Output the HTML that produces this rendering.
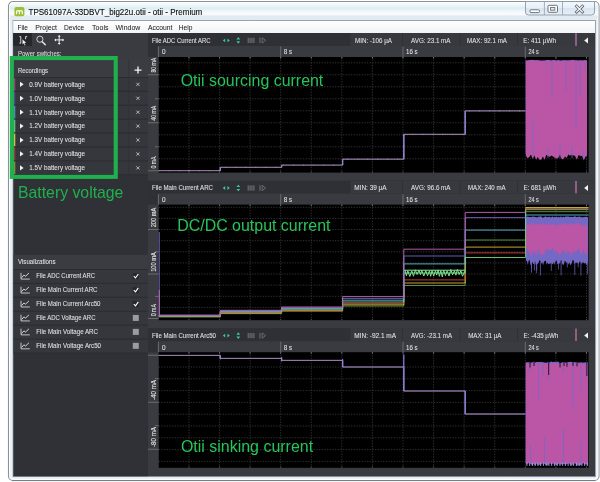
<!DOCTYPE html>
<html><head><meta charset="utf-8"><title>otii</title>
<style>html,body{margin:0;padding:0;background:#fff}body{width:600px;height:482px;overflow:hidden}svg{display:block;will-change:transform}</style></head>
<body>
<svg width="600" height="482" viewBox="0 0 600 482" font-family="Liberation Sans, Arial, sans-serif">
<defs>
<linearGradient id="frame" x1="0" y1="0" x2="0" y2="1"><stop offset="0" stop-color="#fbfdfe"/><stop offset="0.006" stop-color="#f3f9fb"/><stop offset="0.014" stop-color="#dcedf2"/><stop offset="0.022" stop-color="#f5fafc"/><stop offset="0.027" stop-color="#f7fafc"/><stop offset="0.031" stop-color="#e1e9f1"/><stop offset="0.05" stop-color="#e6eef6"/><stop offset="1" stop-color="#eaf1f8"/></linearGradient>
<linearGradient id="btn" x1="0" y1="0" x2="0" y2="1"><stop offset="0" stop-color="#f4f8fc"/><stop offset="0.5" stop-color="#e6eef7"/><stop offset="0.5" stop-color="#d8e4f0"/><stop offset="1" stop-color="#e6eff8"/></linearGradient>
<linearGradient id="menu" x1="0" y1="0" x2="0" y2="1"><stop offset="0" stop-color="#ffffff"/><stop offset="1" stop-color="#f1f3f6"/></linearGradient>
</defs>
<rect x="0.00" y="0.00" width="600.00" height="482.00" fill="#ffffff" />
<rect x="8.5" y="1.5" width="590.5" height="479" rx="4.5" ry="4.5" fill="url(#frame)" stroke="#8b9199" stroke-width="1.1"/>
<rect x="9.6" y="2.6" width="588.3" height="476.8" rx="3.6" ry="3.6" fill="none" stroke="#ffffff" stroke-opacity="0.9" stroke-width="1"/>
<path d="M12 480.6H595.5" stroke="#6f757d" stroke-width="1" stroke-opacity="0.75"/>
<rect x="13.1" y="20.6" width="582.3" height="456" fill="none" stroke="#8d959e" stroke-width="0.9"/>
<rect x="14.4" y="6.9" width="10" height="9.4" rx="1.8" fill="#9cc034"/>
<path d="M16.5 14.3v-2.4q0-1.3 1.45-1.3t1.45 1.3v2.4m0-2.4q0-1.3 1.45-1.3t1.45 1.3v2.4" fill="none" stroke="#fff" stroke-width="1.2"/>
<text x="28.50" y="14.80" font-size="8.5" fill="#0a0a0a" textLength="173.80" lengthAdjust="spacingAndGlyphs" stroke="#0a0a0a" stroke-width="0.12">TPS61097A-33DBVT_big22u.otii - otii - Premium</text>
<path d="M525.5 1.5h69v10.5q0 3-3 3h-63q-3 0-3-3z" fill="url(#btn)" stroke="#8b97a5" stroke-width="0.9"/>
<path d="M544.4 2v13M562.5 2v13" stroke="#9aa6b3" stroke-width="0.9"/>
<rect x="530" y="9.8" width="9.5" height="2.8" rx="1" fill="#fff" stroke="#5d646d" stroke-width="0.9"/>
<rect x="548" y="5.3" width="9.5" height="7" rx="1" fill="#fff" stroke="#5d646d" stroke-width="0.9"/>
<rect x="550.6" y="7.6" width="4.3" height="2.6" fill="#dfe8f2" stroke="#5d646d" stroke-width="0.8"/>
<path d="M576.6 6.2l5.8 5.8m0-5.8l-5.8 5.8" stroke="#5d646d" stroke-width="2.8" stroke-linecap="square"/>
<path d="M576.6 6.2l5.8 5.8m0-5.8l-5.8 5.8" stroke="#fff" stroke-width="1.2" stroke-linecap="square"/>
<rect x="13.30" y="21.00" width="581.70" height="12.00" fill="url(#menu)" />
<text x="17.50" y="30.00" font-size="7.2" fill="#111" textLength="10.50" lengthAdjust="spacingAndGlyphs" >File</text>
<text x="35.30" y="30.00" font-size="7.2" fill="#111" textLength="21.70" lengthAdjust="spacingAndGlyphs" >Project</text>
<text x="64.00" y="30.00" font-size="7.2" fill="#111" textLength="20.30" lengthAdjust="spacingAndGlyphs" >Device</text>
<text x="92.00" y="30.00" font-size="7.2" fill="#111" textLength="16.50" lengthAdjust="spacingAndGlyphs" >Tools</text>
<text x="115.50" y="30.00" font-size="7.2" fill="#111" textLength="24.80" lengthAdjust="spacingAndGlyphs" >Window</text>
<text x="148.00" y="30.00" font-size="7.2" fill="#111" textLength="24.50" lengthAdjust="spacingAndGlyphs" >Account</text>
<text x="178.80" y="30.00" font-size="7.2" fill="#111" textLength="13.70" lengthAdjust="spacingAndGlyphs" >Help</text>
<rect x="13.50" y="33.00" width="581.50" height="443.20" fill="#3a3b40" />
<rect x="13.50" y="33.00" width="134.50" height="443.20" fill="#303136" />
<rect x="13.50" y="33.00" width="134.50" height="27.00" fill="#3a3b40" />
<rect x="13.30" y="33.00" width="18.70" height="13.00" fill="#26272b" />
<path d="M19.4 36.6h1.4v6.6h-1.4M27.2 36.6h-1.6v2.6" fill="none" stroke="#e8e8e8" stroke-width="0.9"/>
<path d="M22.4 39.2l0 5.4 1.3-1.2 1 2 .9-.4-1-2 1.8-.2z" fill="#fff" stroke="#222" stroke-width="0.3"/>
<circle cx="39.9" cy="39.2" r="3.1" fill="none" stroke="#dcdcdc" stroke-width="0.9"/><path d="M42.3 41.7l2.9 2.9" stroke="#dcdcdc" stroke-width="1.5" stroke-linecap="round"/>
<path d="M59.2 35.6v8.6M54.9 39.9h8.6" stroke="#f0f0f0" stroke-width="1"/><path d="M59.2 35l1.5 1.7h-3zM59.2 44.8l1.5-1.7h-3zM54.3 39.9l1.7-1.5v3zM64.1 39.9l-1.7-1.5v3z" fill="#f0f0f0"/>
<text x="18.00" y="55.80" font-size="6.7" fill="#dcdcde" textLength="43.40" lengthAdjust="spacingAndGlyphs"  stroke="#dcdcde" stroke-width="0.06">Power switches:</text>
<rect x="13.50" y="60.00" width="134.50" height="17.00" fill="#3b3c41" />
<text x="18.00" y="72.60" font-size="6.7" fill="#e2e2e4" textLength="30.00" lengthAdjust="spacingAndGlyphs"  stroke="#e2e2e4" stroke-width="0.06">Recordings</text>
<rect x="13.50" y="77.00" width="134.50" height="13.92" fill="#36373c" />
<rect x="13.50" y="77.00" width="134.50" height="0.90" fill="#2b2c31" />
<rect x="13.50" y="77.90" width="1.80" height="13.02" fill="#96407c" />
<path d="M20 81.76l3.6 2.6-3.6 2.6z" fill="#f2f2f2"/>
<text x="29.30" y="86.66" font-size="6.7" fill="#e2e2e4" textLength="55.70" lengthAdjust="spacingAndGlyphs"  stroke="#e2e2e4" stroke-width="0.06">0.9V battery voltage</text>
<path d="M136.3 82.76l3.2 3.2m0-3.2l-3.2 3.2" stroke="#d0d0d2" stroke-width="0.8"/>
<rect x="13.50" y="90.92" width="134.50" height="13.92" fill="#36373c" />
<rect x="13.50" y="90.92" width="134.50" height="0.90" fill="#2b2c31" />
<rect x="13.50" y="91.82" width="1.80" height="13.02" fill="#514892" />
<path d="M20 95.68l3.6 2.6-3.6 2.6z" fill="#f2f2f2"/>
<text x="29.30" y="100.58" font-size="6.7" fill="#e2e2e4" textLength="55.70" lengthAdjust="spacingAndGlyphs"  stroke="#e2e2e4" stroke-width="0.06">1.0V battery voltage</text>
<path d="M136.3 96.68l3.2 3.2m0-3.2l-3.2 3.2" stroke="#d0d0d2" stroke-width="0.8"/>
<rect x="13.50" y="104.84" width="134.50" height="13.92" fill="#36373c" />
<rect x="13.50" y="104.84" width="134.50" height="0.90" fill="#2b2c31" />
<rect x="13.50" y="105.74" width="1.80" height="13.02" fill="#4a8fb6" />
<path d="M20 109.60l3.6 2.6-3.6 2.6z" fill="#f2f2f2"/>
<text x="29.30" y="114.50" font-size="6.7" fill="#e2e2e4" textLength="55.70" lengthAdjust="spacingAndGlyphs"  stroke="#e2e2e4" stroke-width="0.06">1.1V battery voltage</text>
<path d="M136.3 110.60l3.2 3.2m0-3.2l-3.2 3.2" stroke="#d0d0d2" stroke-width="0.8"/>
<rect x="13.50" y="118.76" width="134.50" height="13.92" fill="#36373c" />
<rect x="13.50" y="118.76" width="134.50" height="0.90" fill="#2b2c31" />
<rect x="13.50" y="119.66" width="1.80" height="13.02" fill="#67b981" />
<path d="M20 123.52l3.6 2.6-3.6 2.6z" fill="#f2f2f2"/>
<text x="29.30" y="128.42" font-size="6.7" fill="#e2e2e4" textLength="55.70" lengthAdjust="spacingAndGlyphs"  stroke="#e2e2e4" stroke-width="0.06">1.2V battery voltage</text>
<path d="M136.3 124.52l3.2 3.2m0-3.2l-3.2 3.2" stroke="#d0d0d2" stroke-width="0.8"/>
<rect x="13.50" y="132.68" width="134.50" height="13.92" fill="#36373c" />
<rect x="13.50" y="132.68" width="134.50" height="0.90" fill="#2b2c31" />
<rect x="13.50" y="133.58" width="1.80" height="13.02" fill="#c9c04a" />
<path d="M20 137.44l3.6 2.6-3.6 2.6z" fill="#f2f2f2"/>
<text x="29.30" y="142.34" font-size="6.7" fill="#e2e2e4" textLength="55.70" lengthAdjust="spacingAndGlyphs"  stroke="#e2e2e4" stroke-width="0.06">1.3V battery voltage</text>
<path d="M136.3 138.44l3.2 3.2m0-3.2l-3.2 3.2" stroke="#d0d0d2" stroke-width="0.8"/>
<rect x="13.50" y="146.60" width="134.50" height="13.92" fill="#36373c" />
<rect x="13.50" y="146.60" width="134.50" height="0.90" fill="#2b2c31" />
<rect x="13.50" y="147.50" width="1.80" height="13.02" fill="#9a3a3a" />
<path d="M20 151.36l3.6 2.6-3.6 2.6z" fill="#f2f2f2"/>
<text x="29.30" y="156.26" font-size="6.7" fill="#e2e2e4" textLength="55.70" lengthAdjust="spacingAndGlyphs"  stroke="#e2e2e4" stroke-width="0.06">1.4V battery voltage</text>
<path d="M136.3 152.36l3.2 3.2m0-3.2l-3.2 3.2" stroke="#d0d0d2" stroke-width="0.8"/>
<rect x="13.50" y="160.52" width="134.50" height="13.92" fill="#36373c" />
<rect x="13.50" y="160.52" width="134.50" height="0.90" fill="#2b2c31" />
<rect x="13.50" y="161.42" width="1.80" height="13.02" fill="#848f3a" />
<path d="M20 165.28l3.6 2.6-3.6 2.6z" fill="#f2f2f2"/>
<text x="29.30" y="170.18" font-size="6.7" fill="#e2e2e4" textLength="55.70" lengthAdjust="spacingAndGlyphs"  stroke="#e2e2e4" stroke-width="0.06">1.5V battery voltage</text>
<path d="M136.3 166.28l3.2 3.2m0-3.2l-3.2 3.2" stroke="#d0d0d2" stroke-width="0.8"/>
<rect x="13.50" y="174.40" width="134.50" height="0.90" fill="#2b2c31" />
<rect x="128.40" y="60.00" width="0.80" height="114.60" fill="#303136" />
<path d="M138 66.6v7M134.5 70.1h7" stroke="#f4f4f4" stroke-width="1.3"/>
<rect x="13.50" y="255.00" width="134.50" height="14.00" fill="#3b3c41" />
<text x="18.00" y="264.20" font-size="6.7" fill="#e2e2e4" textLength="37.50" lengthAdjust="spacingAndGlyphs"  stroke="#e2e2e4" stroke-width="0.06">Visualizations</text>
<rect x="13.50" y="269.00" width="134.50" height="13.95" fill="#36373c" />
<rect x="13.50" y="269.00" width="134.50" height="0.90" fill="#2b2c31" />
<path d="M21 272.88v6.2h8.8" fill="none" stroke="#e6e6e6" stroke-width="0.8"/>
<path d="M21.6 277.68l2.3-2.6 1.6 1.2 3.4-3.2" fill="none" stroke="#e6e6e6" stroke-width="0.9"/>
<text x="36.30" y="278.38" font-size="6.7" fill="#e2e2e4" textLength="58.70" lengthAdjust="spacingAndGlyphs"  stroke="#e2e2e4" stroke-width="0.06">File ADC Current ARC</text>
<rect x="132.80" y="273.08" width="6.00" height="6.00" fill="#26272b" />
<path d="M133.8 276.18l1.7 1.8 2.8-4" fill="none" stroke="#fff" stroke-width="1.1"/>
<rect x="13.50" y="282.95" width="134.50" height="13.95" fill="#36373c" />
<rect x="13.50" y="282.95" width="134.50" height="0.90" fill="#2b2c31" />
<path d="M21 286.82v6.2h8.8" fill="none" stroke="#e6e6e6" stroke-width="0.8"/>
<path d="M21.6 291.62l2.3-2.6 1.6 1.2 3.4-3.2" fill="none" stroke="#e6e6e6" stroke-width="0.9"/>
<text x="36.30" y="292.32" font-size="6.7" fill="#e2e2e4" textLength="61.20" lengthAdjust="spacingAndGlyphs"  stroke="#e2e2e4" stroke-width="0.06">File Main Current ARC</text>
<rect x="132.80" y="287.02" width="6.00" height="6.00" fill="#26272b" />
<path d="M133.8 290.12l1.7 1.8 2.8-4" fill="none" stroke="#fff" stroke-width="1.1"/>
<rect x="13.50" y="296.90" width="134.50" height="13.95" fill="#36373c" />
<rect x="13.50" y="296.90" width="134.50" height="0.90" fill="#2b2c31" />
<path d="M21 300.78v6.2h8.8" fill="none" stroke="#e6e6e6" stroke-width="0.8"/>
<path d="M21.6 305.58l2.3-2.6 1.6 1.2 3.4-3.2" fill="none" stroke="#e6e6e6" stroke-width="0.9"/>
<text x="36.30" y="306.28" font-size="6.7" fill="#e2e2e4" textLength="64.20" lengthAdjust="spacingAndGlyphs"  stroke="#e2e2e4" stroke-width="0.06">File Main Current Arc50</text>
<rect x="132.80" y="300.98" width="6.00" height="6.00" fill="#26272b" />
<path d="M133.8 304.08l1.7 1.8 2.8-4" fill="none" stroke="#fff" stroke-width="1.1"/>
<rect x="13.50" y="310.85" width="134.50" height="13.95" fill="#36373c" />
<rect x="13.50" y="310.85" width="134.50" height="0.90" fill="#2b2c31" />
<path d="M21 314.73v6.2h8.8" fill="none" stroke="#e6e6e6" stroke-width="0.8"/>
<path d="M21.6 319.53l2.3-2.6 1.6 1.2 3.4-3.2" fill="none" stroke="#e6e6e6" stroke-width="0.9"/>
<text x="36.30" y="320.23" font-size="6.7" fill="#e2e2e4" textLength="59.20" lengthAdjust="spacingAndGlyphs"  stroke="#e2e2e4" stroke-width="0.06">File ADC Voltage ARC</text>
<rect x="132.80" y="314.93" width="6.00" height="6.00" fill="#9c9c9e" />
<rect x="13.50" y="324.80" width="134.50" height="13.95" fill="#36373c" />
<rect x="13.50" y="324.80" width="134.50" height="0.90" fill="#2b2c31" />
<path d="M21 328.68v6.2h8.8" fill="none" stroke="#e6e6e6" stroke-width="0.8"/>
<path d="M21.6 333.48l2.3-2.6 1.6 1.2 3.4-3.2" fill="none" stroke="#e6e6e6" stroke-width="0.9"/>
<text x="36.30" y="334.18" font-size="6.7" fill="#e2e2e4" textLength="61.70" lengthAdjust="spacingAndGlyphs"  stroke="#e2e2e4" stroke-width="0.06">File Main Voltage ARC</text>
<rect x="132.80" y="328.88" width="6.00" height="6.00" fill="#9c9c9e" />
<rect x="13.50" y="338.75" width="134.50" height="13.95" fill="#36373c" />
<rect x="13.50" y="338.75" width="134.50" height="0.90" fill="#2b2c31" />
<path d="M21 342.63v6.2h8.8" fill="none" stroke="#e6e6e6" stroke-width="0.8"/>
<path d="M21.6 347.43l2.3-2.6 1.6 1.2 3.4-3.2" fill="none" stroke="#e6e6e6" stroke-width="0.9"/>
<text x="36.30" y="348.13" font-size="6.7" fill="#e2e2e4" textLength="64.70" lengthAdjust="spacingAndGlyphs"  stroke="#e2e2e4" stroke-width="0.06">File Main Voltage Arc50</text>
<rect x="132.80" y="342.83" width="6.00" height="6.00" fill="#9c9c9e" />
<rect x="13.50" y="352.70" width="134.50" height="0.90" fill="#2b2c31" />
<rect x="148.00" y="33.00" width="447.00" height="13.00" fill="#2f3035" />
<rect x="350.50" y="33.00" width="244.50" height="13.00" fill="#38393e" />
<rect x="402.10" y="33.00" width="0.80" height="13.00" fill="#2f3035" />
<rect x="459.60" y="33.00" width="0.80" height="13.00" fill="#2f3035" />
<rect x="517.10" y="33.00" width="0.80" height="13.00" fill="#2f3035" />
<rect x="148.00" y="46.00" width="9.90" height="11.00" fill="#2f3035" />
<text x="152.00" y="42.80" font-size="6.7" fill="#e2e2e4" textLength="58.50" lengthAdjust="spacingAndGlyphs"  stroke="#e2e2e4" stroke-width="0.06">File ADC Current ARC</text>
<path d="M222.8 40.4l2.4-1.9v3.8zM229.8 40.4l-2.4-1.9v3.8z" fill="#3cc796"/>
<path d="M238.3 37.1l1.9 2.4h-3.8zM238.3 43.699999999999996l1.9-2.4h-3.8z" fill="#3cc796"/>
<path d="M248.2 37.8v5.2M250.1 37.8v5.2M252 37.8v5.2M253.9 37.8v5.2" stroke="#77787c" stroke-width="1"/>
<path d="M260 37.6v5.6" stroke="#77787c" stroke-width="0.9"/><path d="M262.2 37.8l3.4 2.6-3.4 2.6z" fill="none" stroke="#77787c" stroke-width="0.8"/>
<text x="355.00" y="42.70" font-size="6.3" fill="#e2e2e4" textLength="37.00" lengthAdjust="spacingAndGlyphs"  stroke="#e2e2e4" stroke-width="0.06">MIN: -106 µA</text>
<text x="411.00" y="42.70" font-size="6.3" fill="#e2e2e4" textLength="39.50" lengthAdjust="spacingAndGlyphs"  stroke="#e2e2e4" stroke-width="0.06">AVG: 23.1 mA</text>
<text x="467.00" y="42.70" font-size="6.3" fill="#e2e2e4" textLength="40.00" lengthAdjust="spacingAndGlyphs"  stroke="#e2e2e4" stroke-width="0.06">MAX: 92.1 mA</text>
<text x="523.30" y="42.70" font-size="6.3" fill="#e2e2e4" textLength="32.70" lengthAdjust="spacingAndGlyphs"  stroke="#e2e2e4" stroke-width="0.06">E: 411 µWh</text>
<rect x="575.20" y="33.30" width="1.60" height="12.50" fill="#a8689a" />
<path d="M588 37.4v6l-3.8-3z" fill="#f4f4f4"/>
<rect x="157.90" y="46.50" width="1.00" height="10.50" fill="#6a6b70" />
<text x="162.00" y="54.30" font-size="6.7" fill="#e2e2e4" textLength="3.60" lengthAdjust="spacingAndGlyphs"  stroke="#e2e2e4" stroke-width="0.06">0</text>
<rect x="280.20" y="46.50" width="1.00" height="10.50" fill="#6a6b70" />
<text x="283.80" y="54.30" font-size="6.7" fill="#e2e2e4" textLength="8.40" lengthAdjust="spacingAndGlyphs"  stroke="#e2e2e4" stroke-width="0.06">8 s</text>
<rect x="402.50" y="46.50" width="1.00" height="10.50" fill="#6a6b70" />
<text x="406.00" y="54.30" font-size="6.7" fill="#e2e2e4" textLength="11.60" lengthAdjust="spacingAndGlyphs"  stroke="#e2e2e4" stroke-width="0.06">16 s</text>
<rect x="524.80" y="46.50" width="1.00" height="10.50" fill="#6a6b70" />
<text x="528.40" y="54.30" font-size="6.7" fill="#e2e2e4" textLength="10.40" lengthAdjust="spacingAndGlyphs"  stroke="#e2e2e4" stroke-width="0.06">24 s</text>
<rect x="158.75" y="57.00" width="429.85" height="115.60" fill="#000" />
<path d="M188.97 57.00V172.60 M219.55 57.00V172.60 M250.12 57.00V172.60 M280.70 57.00V172.60 M311.27 57.00V172.60 M341.85 57.00V172.60 M372.43 57.00V172.60 M403.00 57.00V172.60 M433.58 57.00V172.60 M464.15 57.00V172.60 M494.73 57.00V172.60 M525.30 57.00V172.60 M555.88 57.00V172.60 M586.45 57.00V172.60 M158.75 158.80H588.60 M158.75 146.80H588.60 M158.75 134.80H588.60 M158.75 122.80H588.60 M158.75 110.80H588.60 M158.75 98.80H588.60 M158.75 86.80H588.60 M158.75 74.80H588.60 M158.75 62.80H588.60" stroke="#424242" stroke-width="0.75" stroke-dasharray="1.3 1.37" fill="none"/>
<path d="M188.97 57.00v1.6 M219.55 57.00v1.6 M250.12 57.00v1.6 M280.70 57.00v1.6 M311.27 57.00v1.6 M341.85 57.00v1.6 M372.43 57.00v1.6 M403.00 57.00v1.6 M433.58 57.00v1.6 M464.15 57.00v1.6 M494.73 57.00v1.6 M525.30 57.00v1.6 M555.88 57.00v1.6 M586.45 57.00v1.6" stroke="#8a8a8a" stroke-width="0.8" fill="none"/>
<path d="M188.97 172.60v-1.4 M219.55 172.60v-1.4 M250.12 172.60v-1.4 M280.70 172.60v-1.4 M311.27 172.60v-1.4 M341.85 172.60v-1.4 M372.43 172.60v-1.4 M403.00 172.60v-1.4 M433.58 172.60v-1.4 M464.15 172.60v-1.4 M494.73 172.60v-1.4 M525.30 172.60v-1.4 M555.88 172.60v-1.4 M586.45 172.60v-1.4" stroke="#5c5c5c" stroke-width="0.8" fill="none"/>
<rect x="148.00" y="74.40" width="10.60" height="0.80" fill="#77787c" />
<rect x="148.00" y="122.40" width="10.60" height="0.80" fill="#77787c" />
<rect x="148.00" y="170.40" width="10.60" height="0.80" fill="#77787c" />
<rect x="155.00" y="98.40" width="3.60" height="0.80" fill="#77787c" />
<rect x="155.00" y="146.40" width="3.60" height="0.80" fill="#77787c" />
<clipPath id="c1"><rect x="148" y="57" width="11" height="115.6"/></clipPath>
<g clip-path="url(#c1)">
<text transform="translate(155.5 72.60) rotate(-90)" font-size="7" fill="#e2e2e4" stroke="#e2e2e4" stroke-width="0.1" textLength="14.6" lengthAdjust="spacingAndGlyphs">80 mA</text>
</g>
<text transform="translate(155.5 120.60) rotate(-90)" font-size="7" fill="#e2e2e4" stroke="#e2e2e4" stroke-width="0.1" textLength="14.6" lengthAdjust="spacingAndGlyphs">40 mA</text>
<text transform="translate(155.5 168.60) rotate(-90)" font-size="7" fill="#e2e2e4" stroke="#e2e2e4" stroke-width="0.1" textLength="12.2" lengthAdjust="spacingAndGlyphs">0 mA</text>
<path d="M158.75 170.70H220.30V167.30H281.60V165.10H342.60V159.20H403.80V134.30H465.20V110.90H525.60" fill="none" stroke="#7468c6" stroke-width="1.3" stroke-opacity="0.45"/>
<path d="M158.75 170.70H220.30V167.30H281.60V165.10H342.60V159.20H403.80V134.30H465.20V110.90H525.60" fill="none" stroke="#cfa6ca" stroke-width="0.7"/>
<path d="M220.30 170.70V167.30M281.60 167.30V165.10M342.60 165.10V159.20M403.80 159.20V134.30M465.20 134.30V110.90" stroke="#8682dc" stroke-width="1.3" fill="none"/>
<path d="M158.75 170.70H220.30V167.30H281.60V165.10H342.60V159.20H403.80V134.30H465.20V110.90H525.60" fill="none" stroke="#e8c860" stroke-width="0.7" stroke-dasharray="1 9" stroke-opacity="0.6"/>
<path d="M525.6 60.1 L527.3 60.5 L529.0 60.3 L530.7 59.9 L532.4 59.8 L534.1 59.9 L535.8 60.2 L537.5 59.9 L539.2 60.4 L540.9 60.4 L542.6 60.8 L544.3 60.7 L546.0 59.9 L547.7 60.1 L549.4 60.0 L551.1 60.4 L552.8 60.3 L554.5 59.9 L556.2 60.5 L557.9 60.1 L559.6 60.3 L561.3 60.6 L563.0 60.0 L564.7 60.3 L566.4 60.5 L568.1 60.8 L569.8 60.2 L571.5 60.0 L573.2 59.8 L574.9 60.6 L576.6 60.7 L578.3 60.5 L580.0 60.4 L581.7 60.6 L583.4 60.3 L585.1 59.9 L586.8 60.4 L586.8 156.5 L585.1 155.6 L583.4 155.5 L581.7 156.3 L580.0 154.9 L578.3 155.3 L576.6 154.4 L574.9 155.2 L573.2 155.5 L571.5 155.0 L569.8 155.8 L568.1 153.9 L566.4 154.4 L564.7 156.1 L563.0 155.2 L561.3 155.6 L559.6 154.4 L557.9 155.3 L556.2 154.8 L554.5 154.1 L552.8 153.7 L551.1 154.6 L549.4 155.2 L547.7 155.9 L546.0 153.9 L544.3 154.4 L542.6 153.6 L540.9 154.7 L539.2 156.3 L537.5 154.2 L535.8 156.0 L534.1 153.8 L532.4 154.8 L530.7 155.0 L529.0 154.6 L527.3 153.7 L525.6 154.0Z" fill="#7468c6"/>
<path d="M525.9 61.1 L527.6 60.7 L529.3 60.3 L531.0 60.5 L532.7 60.4 L534.4 60.4 L536.1 60.7 L537.8 60.4 L539.5 60.8 L541.2 61.1 L542.9 60.6 L544.6 60.7 L546.3 61.3 L548.0 60.5 L549.7 60.5 L551.4 60.9 L553.1 60.3 L554.8 60.7 L556.5 61.3 L558.2 60.8 L559.9 61.0 L561.6 61.2 L563.3 61.2 L565.0 60.7 L566.7 60.4 L568.4 60.4 L570.1 60.5 L571.8 60.6 L573.5 60.3 L575.2 60.4 L576.9 60.3 L578.6 60.9 L580.3 60.6 L582.0 60.7 L583.7 61.1 L585.4 60.8 L587.1 60.4 L587.1 154.5 L585.4 157.1 L583.7 160.6 L582.0 154.6 L580.3 156.2 L578.6 154.8 L576.9 159.7 L575.2 156.3 L573.5 154.8 L571.8 154.2 L570.1 154.9 L568.4 154.3 L566.7 158.1 L565.0 156.5 L563.3 159.2 L561.6 159.1 L559.9 154.2 L558.2 158.0 L556.5 158.5 L554.8 157.7 L553.1 156.6 L551.4 155.6 L549.7 157.1 L548.0 155.4 L546.3 154.8 L544.6 159.8 L542.9 156.6 L541.2 159.7 L539.5 159.8 L537.8 156.9 L536.1 159.7 L534.4 155.5 L532.7 159.0 L531.0 154.6 L529.3 156.9 L527.6 158.3 L525.9 155.7Z" fill="#bb55a6"/>
<path d="M546 62V66" stroke="#7468c6" stroke-width="0.8"/>
<path d="M552 60V98" stroke="#7468c6" stroke-width="0.8"/>
<path d="M566 60V92" stroke="#7468c6" stroke-width="0.8"/>
<path d="M576 60V128" stroke="#7468c6" stroke-width="0.8"/>
<path d="M580 60V96" stroke="#7468c6" stroke-width="0.8"/>
<path d="M585 60V70" stroke="#7468c6" stroke-width="0.8"/>
<path d="M533 120V156" stroke="#7468c6" stroke-width="0.8"/>
<path d="M548 148V158" stroke="#7468c6" stroke-width="0.8"/>
<path d="M560 144V158" stroke="#7468c6" stroke-width="0.8"/>
<path d="M572 146V158" stroke="#7468c6" stroke-width="0.8"/>
<path d="M583 150V158" stroke="#7468c6" stroke-width="0.8"/>
<rect x="148.00" y="180.60" width="447.00" height="13.00" fill="#2f3035" />
<rect x="350.50" y="180.60" width="244.50" height="13.00" fill="#38393e" />
<rect x="402.10" y="180.60" width="0.80" height="13.00" fill="#2f3035" />
<rect x="459.60" y="180.60" width="0.80" height="13.00" fill="#2f3035" />
<rect x="517.10" y="180.60" width="0.80" height="13.00" fill="#2f3035" />
<rect x="148.00" y="193.60" width="9.90" height="11.00" fill="#2f3035" />
<text x="152.00" y="190.40" font-size="6.7" fill="#e2e2e4" textLength="61.00" lengthAdjust="spacingAndGlyphs"  stroke="#e2e2e4" stroke-width="0.06">File Main Current ARC</text>
<path d="M222.8 188.0l2.4-1.9v3.8zM229.8 188.0l-2.4-1.9v3.8z" fill="#3cc796"/>
<path d="M238.3 184.7l1.9 2.4h-3.8zM238.3 191.3l1.9-2.4h-3.8z" fill="#3cc796"/>
<path d="M248.2 185.4v5.2M250.1 185.4v5.2M252 185.4v5.2M253.9 185.4v5.2" stroke="#77787c" stroke-width="1"/>
<path d="M260 185.2v5.6" stroke="#77787c" stroke-width="0.9"/><path d="M262.2 185.4l3.4 2.6-3.4 2.6z" fill="none" stroke="#77787c" stroke-width="0.8"/>
<text x="354.30" y="190.30" font-size="6.3" fill="#e2e2e4" textLength="32.30" lengthAdjust="spacingAndGlyphs"  stroke="#e2e2e4" stroke-width="0.06">MIN: 39 µA</text>
<text x="411.00" y="190.30" font-size="6.3" fill="#e2e2e4" textLength="39.50" lengthAdjust="spacingAndGlyphs"  stroke="#e2e2e4" stroke-width="0.06">AVG: 96.6 mA</text>
<text x="468.00" y="190.30" font-size="6.3" fill="#e2e2e4" textLength="37.60" lengthAdjust="spacingAndGlyphs"  stroke="#e2e2e4" stroke-width="0.06">MAX: 240 mA</text>
<text x="523.50" y="190.30" font-size="6.3" fill="#e2e2e4" textLength="32.70" lengthAdjust="spacingAndGlyphs"  stroke="#e2e2e4" stroke-width="0.06">E: 681 µWh</text>
<rect x="575.20" y="180.90" width="1.60" height="12.50" fill="#a8689a" />
<path d="M588 185.0v6l-3.8-3z" fill="#f4f4f4"/>
<rect x="157.90" y="194.10" width="1.00" height="10.50" fill="#6a6b70" />
<text x="162.00" y="201.90" font-size="6.7" fill="#e2e2e4" textLength="3.60" lengthAdjust="spacingAndGlyphs"  stroke="#e2e2e4" stroke-width="0.06">0</text>
<rect x="280.20" y="194.10" width="1.00" height="10.50" fill="#6a6b70" />
<text x="283.80" y="201.90" font-size="6.7" fill="#e2e2e4" textLength="8.40" lengthAdjust="spacingAndGlyphs"  stroke="#e2e2e4" stroke-width="0.06">8 s</text>
<rect x="402.50" y="194.10" width="1.00" height="10.50" fill="#6a6b70" />
<text x="406.00" y="201.90" font-size="6.7" fill="#e2e2e4" textLength="11.60" lengthAdjust="spacingAndGlyphs"  stroke="#e2e2e4" stroke-width="0.06">16 s</text>
<rect x="524.80" y="194.10" width="1.00" height="10.50" fill="#6a6b70" />
<text x="528.40" y="201.90" font-size="6.7" fill="#e2e2e4" textLength="10.40" lengthAdjust="spacingAndGlyphs"  stroke="#e2e2e4" stroke-width="0.06">24 s</text>
<rect x="158.75" y="204.60" width="429.85" height="115.60" fill="#000" />
<path d="M188.97 204.60V320.20 M219.55 204.60V320.20 M250.12 204.60V320.20 M280.70 204.60V320.20 M311.27 204.60V320.20 M341.85 204.60V320.20 M372.43 204.60V320.20 M403.00 204.60V320.20 M433.58 204.60V320.20 M464.15 204.60V320.20 M494.73 204.60V320.20 M525.30 204.60V320.20 M555.88 204.60V320.20 M586.45 204.60V320.20 M158.75 307.38H588.60 M158.75 296.26H588.60 M158.75 285.14H588.60 M158.75 274.02H588.60 M158.75 262.90H588.60 M158.75 251.78H588.60 M158.75 240.66H588.60 M158.75 229.54H588.60 M158.75 218.42H588.60 M158.75 207.30H588.60" stroke="#424242" stroke-width="0.75" stroke-dasharray="1.3 1.37" fill="none"/>
<path d="M188.97 204.60v1.6 M219.55 204.60v1.6 M250.12 204.60v1.6 M280.70 204.60v1.6 M311.27 204.60v1.6 M341.85 204.60v1.6 M372.43 204.60v1.6 M403.00 204.60v1.6 M433.58 204.60v1.6 M464.15 204.60v1.6 M494.73 204.60v1.6 M525.30 204.60v1.6 M555.88 204.60v1.6 M586.45 204.60v1.6" stroke="#8a8a8a" stroke-width="0.8" fill="none"/>
<path d="M188.97 320.20v-1.4 M219.55 320.20v-1.4 M250.12 320.20v-1.4 M280.70 320.20v-1.4 M311.27 320.20v-1.4 M341.85 320.20v-1.4 M372.43 320.20v-1.4 M403.00 320.20v-1.4 M433.58 320.20v-1.4 M464.15 320.20v-1.4 M494.73 320.20v-1.4 M525.30 320.20v-1.4 M555.88 320.20v-1.4 M586.45 320.20v-1.4" stroke="#5c5c5c" stroke-width="0.8" fill="none"/>
<rect x="148.00" y="229.10" width="10.60" height="0.80" fill="#77787c" />
<rect x="148.00" y="273.60" width="10.60" height="0.80" fill="#77787c" />
<rect x="148.00" y="318.10" width="10.60" height="0.80" fill="#77787c" />
<rect x="155.00" y="251.40" width="3.60" height="0.80" fill="#77787c" />
<rect x="155.00" y="295.90" width="3.60" height="0.80" fill="#77787c" />
<text transform="translate(155.5 227.30) rotate(-90)" font-size="7" fill="#e2e2e4" stroke="#e2e2e4" stroke-width="0.1" textLength="19.5" lengthAdjust="spacingAndGlyphs">200 mA</text>
<text transform="translate(155.5 271.80) rotate(-90)" font-size="7" fill="#e2e2e4" stroke="#e2e2e4" stroke-width="0.1" textLength="19.5" lengthAdjust="spacingAndGlyphs">100 mA</text>
<text transform="translate(155.5 316.30) rotate(-90)" font-size="7" fill="#e2e2e4" stroke="#e2e2e4" stroke-width="0.1" textLength="12.2" lengthAdjust="spacingAndGlyphs">0 mA</text>
<path d="M526.0 216.7 L526.9 217.3 L527.8 216.3 L528.7 216.9 L529.6 217.0 L530.5 216.9 L531.4 217.3 L532.3 216.6 L533.2 216.5 L534.1 216.9 L535.0 216.7 L535.9 217.3 L536.8 217.3 L537.7 217.3 L538.6 216.6 L539.5 216.7 L540.4 216.3 L541.3 216.6 L542.2 217.4 L543.1 217.4 L544.0 217.4 L544.9 216.6 L545.8 216.5 L546.7 217.0 L547.6 217.3 L548.5 217.1 L549.4 216.4 L550.3 217.4 L551.2 217.2 L552.1 216.5 L553.0 216.7 L553.9 217.5 L554.8 216.8 L555.7 217.2 L556.6 216.5 L557.5 217.4 L558.4 216.5 L559.3 217.5 L560.2 216.7 L561.1 216.5 L562.0 217.5 L562.9 216.9 L563.8 216.8 L564.7 217.3 L565.6 216.6 L566.5 216.6 L567.4 216.6 L568.3 216.5 L569.2 216.7 L570.1 217.0 L571.0 216.8 L571.9 216.9 L572.8 216.9 L573.7 216.8 L574.6 216.3 L575.5 216.5 L576.4 217.2 L577.3 216.7 L578.2 217.0 L579.1 216.4 L580.0 216.6 L580.9 217.2 L581.8 217.0 L582.7 217.4 L583.6 217.0 L584.5 216.9 L585.4 216.8 L586.3 216.9 L587.2 217.1 L588.1 217.4 L588.1 261.2 L587.2 264.6 L586.3 265.0 L585.4 262.7 L584.5 263.6 L583.6 262.5 L582.7 262.2 L581.8 264.0 L580.9 262.5 L580.0 261.3 L579.1 262.8 L578.2 264.1 L577.3 262.6 L576.4 262.8 L575.5 262.4 L574.6 264.2 L573.7 260.7 L572.8 259.8 L571.9 262.7 L571.0 264.8 L570.1 264.8 L569.2 262.3 L568.3 264.8 L567.4 262.0 L566.5 263.0 L565.6 261.3 L564.7 260.9 L563.8 264.6 L562.9 264.9 L562.0 263.3 L561.1 259.8 L560.2 262.8 L559.3 263.4 L558.4 264.3 L557.5 264.2 L556.6 260.5 L555.7 260.7 L554.8 265.0 L553.9 261.9 L553.0 264.2 L552.1 264.1 L551.2 262.4 L550.3 264.1 L549.4 263.4 L548.5 264.2 L547.6 262.4 L546.7 264.7 L545.8 260.8 L544.9 261.0 L544.0 261.7 L543.1 265.2 L542.2 262.2 L541.3 263.6 L540.4 261.3 L539.5 259.9 L538.6 262.6 L537.7 263.8 L536.8 264.2 L535.9 265.2 L535.0 260.9 L534.1 264.1 L533.2 264.0 L532.3 261.8 L531.4 263.6 L530.5 265.2 L529.6 259.9 L528.7 260.5 L527.8 265.0 L526.9 260.6 L526.0 261.2Z" fill="#7468c6"/>
<path d="M561.1 262V275.4" stroke="#7468c6" stroke-width="0.7"/>
<path d="M578.2 262V267.4" stroke="#7468c6" stroke-width="0.7"/>
<path d="M534.4 262V270.4" stroke="#7468c6" stroke-width="0.7"/>
<path d="M531.4 262V268.4" stroke="#7468c6" stroke-width="0.7"/>
<path d="M531.5 262V272.7" stroke="#7468c6" stroke-width="0.7"/>
<path d="M574.8 262V275.0" stroke="#7468c6" stroke-width="0.7"/>
<path d="M536.4 262V273.2" stroke="#7468c6" stroke-width="0.7"/>
<path d="M567.3 262V267.4" stroke="#7468c6" stroke-width="0.7"/>
<path d="M580.9 262V275.7" stroke="#7468c6" stroke-width="0.7"/>
<path d="M540.4 262V275.5" stroke="#7468c6" stroke-width="0.7"/>
<path d="M551.3 262V270.9" stroke="#7468c6" stroke-width="0.7"/>
<path d="M587.4 262V274.3" stroke="#7468c6" stroke-width="0.7"/>
<path d="M536.8 262V270.3" stroke="#7468c6" stroke-width="0.7"/>
<path d="M558.5 262V269.4" stroke="#7468c6" stroke-width="0.7"/>
<path d="M526.2 223.6 L527.1 225.3 L528.0 224.8 L528.9 223.1 L529.8 225.0 L530.7 223.2 L531.6 225.5 L532.5 223.3 L533.4 223.1 L534.3 223.9 L535.2 224.4 L536.1 225.6 L537.0 223.5 L537.9 224.8 L538.8 223.3 L539.7 225.2 L540.6 223.2 L541.5 225.0 L542.4 223.3 L543.3 223.2 L544.2 224.5 L545.1 224.8 L546.0 223.9 L546.9 224.7 L547.8 223.4 L548.7 223.2 L549.6 224.0 L550.5 225.4 L551.4 224.6 L552.3 224.1 L553.2 223.8 L554.1 225.3 L555.0 223.6 L555.9 226.0 L556.8 225.6 L557.7 224.6 L558.6 224.3 L559.5 225.2 L560.4 224.1 L561.3 225.3 L562.2 224.3 L563.1 223.2 L564.0 223.2 L564.9 223.8 L565.8 223.3 L566.7 225.8 L567.6 223.9 L568.5 223.9 L569.4 223.5 L570.3 223.8 L571.2 226.1 L572.1 223.8 L573.0 224.0 L573.9 223.0 L574.8 224.5 L575.7 223.6 L576.6 223.0 L577.5 223.3 L578.4 223.1 L579.3 224.0 L580.2 224.9 L581.1 225.4 L582.0 225.3 L582.9 224.2 L583.8 226.2 L584.7 225.3 L585.6 223.1 L586.5 225.9 L587.4 225.3 L587.4 254.6 L586.5 253.1 L585.6 254.8 L584.7 253.2 L583.8 249.1 L582.9 250.5 L582.0 255.2 L581.1 253.3 L580.2 252.2 L579.3 249.8 L578.4 248.0 L577.5 251.2 L576.6 250.0 L575.7 252.0 L574.8 252.0 L573.9 251.0 L573.0 250.8 L572.1 255.9 L571.2 252.4 L570.3 255.9 L569.4 251.5 L568.5 251.7 L567.6 249.8 L566.7 253.4 L565.8 254.9 L564.9 249.2 L564.0 254.0 L563.1 248.9 L562.2 250.7 L561.3 253.1 L560.4 254.8 L559.5 256.1 L558.6 252.1 L557.7 254.8 L556.8 251.4 L555.9 248.7 L555.0 251.8 L554.1 252.4 L553.2 247.9 L552.3 248.0 L551.4 249.3 L550.5 250.2 L549.6 250.4 L548.7 249.5 L547.8 249.2 L546.9 249.8 L546.0 248.9 L545.1 255.6 L544.2 250.6 L543.3 255.0 L542.4 255.0 L541.5 254.5 L540.6 255.7 L539.7 251.4 L538.8 248.3 L537.9 253.7 L537.0 255.5 L536.1 250.0 L535.2 255.5 L534.3 248.9 L533.4 254.3 L532.5 250.0 L531.6 256.0 L530.7 256.1 L529.8 252.1 L528.9 250.6 L528.0 251.5 L527.1 248.0 L526.2 250.5Z" fill="#bb55a6"/>
<path d="M158.75 316.90H220.30V313.60H281.60V311.20H342.60V306.00H403.80V285.50H465.20V240.00H525.60V211.70H588.50" fill="none" stroke="#5f9f46" stroke-width="0.9"/>
<path d="M158.75 316.60H220.30V313.10H281.60V310.60H342.60V304.80H403.80V283.00H465.20V247.10H525.60V207.50H588.50" fill="none" stroke="#dcb63c" stroke-width="0.9"/>
<path d="M158.75 316.30H220.30V312.60H281.60V310.00H342.60V303.40H403.80V279.90H465.20V252.90H525.60V208.50H588.50" fill="none" stroke="#d6443c" stroke-width="0.9"/>
<path d="M158.75 316.00H220.30V312.00H281.60V309.20H342.60V302.00H403.80V273.00H465.20V257.50H525.60V209.70H588.50" fill="none" stroke="#6fd482" stroke-width="0.9"/>
<path d="M158.75 315.70H220.30V311.40H281.60V308.40H342.60V300.20H403.80V263.90H465.20V230.10H525.60V215.00H588.50" fill="none" stroke="#62c0dc" stroke-width="0.9"/>
<path d="M158.75 315.40H220.30V310.80H281.60V307.70H342.60V298.40H403.80V256.00H465.20V217.60H525.60" fill="none" stroke="#6f66c4" stroke-width="0.9"/>
<path d="M158.75 315.10H220.30V310.30H281.60V307.00H342.60V296.60H403.80V249.20H465.20V212.40H525.60" fill="none" stroke="#c468b8" stroke-width="0.9"/>
<path d="M404.4 271L405.0 270.3L406.4 275.7L407.8 270.8L409.8 276.5L411.8 271.0L413.5 276.2L415.3 269.8L417.1 274.5L419.0 270.0L420.4 274.7L421.8 270.4L423.8 276.0L425.8 270.6L427.6 275.7L429.4 270.8L430.7 276.3L432.0 270.4L433.7 276.1L435.4 270.7L436.7 275.1L438.1 269.9L439.4 276.3L440.8 270.7L442.3 276.9L443.7 270.1L445.4 275.6L447.1 270.8L449.0 276.0L450.8 269.5L452.6 274.8L454.4 270.7L455.9 275.2L457.4 269.4L459.2 274.6L460.9 270.6L462.5 276.2L465 271" fill="none" stroke="#7fe392" stroke-width="1.0" stroke-linejoin="round"/>
<rect x="404.40" y="269.60" width="60.60" height="1.40" fill="#7fe392" opacity="0.75"/>
<path d="M159.3 232V316" stroke="#7468c6" stroke-width="0.9"/>
<path d="M159.3 290V316" stroke="#cc6cc0" stroke-width="0.9"/>
<rect x="148.00" y="328.20" width="447.00" height="13.00" fill="#2f3035" />
<rect x="350.50" y="328.20" width="244.50" height="13.00" fill="#38393e" />
<rect x="402.10" y="328.20" width="0.80" height="13.00" fill="#2f3035" />
<rect x="459.60" y="328.20" width="0.80" height="13.00" fill="#2f3035" />
<rect x="517.10" y="328.20" width="0.80" height="13.00" fill="#2f3035" />
<rect x="148.00" y="341.20" width="9.90" height="11.00" fill="#2f3035" />
<text x="152.00" y="338.00" font-size="6.7" fill="#e2e2e4" textLength="64.00" lengthAdjust="spacingAndGlyphs"  stroke="#e2e2e4" stroke-width="0.06">File Main Current Arc50</text>
<path d="M222.8 335.59999999999997l2.4-1.9v3.8zM229.8 335.59999999999997l-2.4-1.9v3.8z" fill="#3cc796"/>
<path d="M238.3 332.29999999999995l1.9 2.4h-3.8zM238.3 338.9l1.9-2.4h-3.8z" fill="#3cc796"/>
<path d="M248.2 332.99999999999994v5.2M250.1 332.99999999999994v5.2M252 332.99999999999994v5.2M253.9 332.99999999999994v5.2" stroke="#77787c" stroke-width="1"/>
<path d="M260 332.79999999999995v5.6" stroke="#77787c" stroke-width="0.9"/><path d="M262.2 332.99999999999994l3.4 2.6-3.4 2.6z" fill="none" stroke="#77787c" stroke-width="0.8"/>
<text x="354.30" y="337.90" font-size="6.3" fill="#e2e2e4" textLength="41.70" lengthAdjust="spacingAndGlyphs"  stroke="#e2e2e4" stroke-width="0.06">MIN: -92.1 mA</text>
<text x="411.00" y="337.90" font-size="6.3" fill="#e2e2e4" textLength="41.00" lengthAdjust="spacingAndGlyphs"  stroke="#e2e2e4" stroke-width="0.06">AVG: -23.1 mA</text>
<text x="468.20" y="337.90" font-size="6.3" fill="#e2e2e4" textLength="33.20" lengthAdjust="spacingAndGlyphs"  stroke="#e2e2e4" stroke-width="0.06">MAX: 31 µA</text>
<text x="523.50" y="337.90" font-size="6.3" fill="#e2e2e4" textLength="34.80" lengthAdjust="spacingAndGlyphs"  stroke="#e2e2e4" stroke-width="0.06">E: -435 µWh</text>
<rect x="575.20" y="328.50" width="1.60" height="12.50" fill="#a8689a" />
<path d="M588 332.59999999999997v6l-3.8-3z" fill="#f4f4f4"/>
<rect x="157.90" y="341.70" width="1.00" height="10.50" fill="#6a6b70" />
<text x="162.00" y="349.50" font-size="6.7" fill="#e2e2e4" textLength="3.60" lengthAdjust="spacingAndGlyphs"  stroke="#e2e2e4" stroke-width="0.06">0</text>
<rect x="280.20" y="341.70" width="1.00" height="10.50" fill="#6a6b70" />
<text x="283.80" y="349.50" font-size="6.7" fill="#e2e2e4" textLength="8.40" lengthAdjust="spacingAndGlyphs"  stroke="#e2e2e4" stroke-width="0.06">8 s</text>
<rect x="402.50" y="341.70" width="1.00" height="10.50" fill="#6a6b70" />
<text x="406.00" y="349.50" font-size="6.7" fill="#e2e2e4" textLength="11.60" lengthAdjust="spacingAndGlyphs"  stroke="#e2e2e4" stroke-width="0.06">16 s</text>
<rect x="524.80" y="341.70" width="1.00" height="10.50" fill="#6a6b70" />
<text x="528.40" y="349.50" font-size="6.7" fill="#e2e2e4" textLength="10.40" lengthAdjust="spacingAndGlyphs"  stroke="#e2e2e4" stroke-width="0.06">24 s</text>
<rect x="158.75" y="352.20" width="429.85" height="115.60" fill="#000" />
<path d="M188.97 352.20V467.80 M219.55 352.20V467.80 M250.12 352.20V467.80 M280.70 352.20V467.80 M311.27 352.20V467.80 M341.85 352.20V467.80 M372.43 352.20V467.80 M403.00 352.20V467.80 M433.58 352.20V467.80 M464.15 352.20V467.80 M494.73 352.20V467.80 M525.30 352.20V467.80 M555.88 352.20V467.80 M586.45 352.20V467.80 M158.75 367.00H588.60 M158.75 378.80H588.60 M158.75 390.60H588.60 M158.75 402.40H588.60 M158.75 414.20H588.60 M158.75 426.00H588.60 M158.75 437.80H588.60 M158.75 449.60H588.60 M158.75 461.40H588.60" stroke="#424242" stroke-width="0.75" stroke-dasharray="1.3 1.37" fill="none"/>
<path d="M188.97 352.20v1.6 M219.55 352.20v1.6 M250.12 352.20v1.6 M280.70 352.20v1.6 M311.27 352.20v1.6 M341.85 352.20v1.6 M372.43 352.20v1.6 M403.00 352.20v1.6 M433.58 352.20v1.6 M464.15 352.20v1.6 M494.73 352.20v1.6 M525.30 352.20v1.6 M555.88 352.20v1.6 M586.45 352.20v1.6" stroke="#8a8a8a" stroke-width="0.8" fill="none"/>
<path d="M188.97 467.80v-1.4 M219.55 467.80v-1.4 M250.12 467.80v-1.4 M280.70 467.80v-1.4 M311.27 467.80v-1.4 M341.85 467.80v-1.4 M372.43 467.80v-1.4 M403.00 467.80v-1.4 M433.58 467.80v-1.4 M464.15 467.80v-1.4 M494.73 467.80v-1.4 M525.30 467.80v-1.4 M555.88 467.80v-1.4 M586.45 467.80v-1.4" stroke="#5c5c5c" stroke-width="0.8" fill="none"/>
<rect x="148.00" y="354.80" width="10.60" height="0.80" fill="#77787c" />
<rect x="148.00" y="401.80" width="10.60" height="0.80" fill="#77787c" />
<rect x="148.00" y="448.80" width="10.60" height="0.80" fill="#77787c" />
<rect x="155.00" y="378.30" width="3.60" height="0.80" fill="#77787c" />
<rect x="155.00" y="425.30" width="3.60" height="0.80" fill="#77787c" />
<text transform="translate(155.5 400.00) rotate(-90)" font-size="7" fill="#e2e2e4" stroke="#e2e2e4" stroke-width="0.1" textLength="20" lengthAdjust="spacingAndGlyphs">-40 mA</text>
<text transform="translate(155.5 447.00) rotate(-90)" font-size="7" fill="#e2e2e4" stroke="#e2e2e4" stroke-width="0.1" textLength="20" lengthAdjust="spacingAndGlyphs">-80 mA</text>
<path d="M158.75 355.40H220.30V358.40H281.60V360.40H342.60V367.00H403.80V391.00H465.20V414.00H525.60" fill="none" stroke="#7468c6" stroke-width="1.3" stroke-opacity="0.45"/>
<path d="M158.75 355.40H220.30V358.40H281.60V360.40H342.60V367.00H403.80V391.00H465.20V414.00H525.60" fill="none" stroke="#cfa6ca" stroke-width="0.7"/>
<path d="M220.30 355.40V358.40M281.60 358.40V360.40M342.60 360.40V367.00M403.80 367.00V391.00M465.20 391.00V414.00" stroke="#8682dc" stroke-width="1.3" fill="none"/>
<path d="M403.8 354.5V367" stroke="#8c84e0" stroke-width="1.2"/>
<path d="M220.3 356V359.5M281.6 357V361.5M342.6 359V367" stroke="#8c84e0" stroke-width="1"/>
<path d="M525.6 362.4 L527.2 362.2 L528.8 362.2 L530.4 362.7 L532.0 362.8 L533.6 361.6 L535.2 362.6 L536.8 362.1 L538.4 361.9 L540.0 361.9 L541.6 361.8 L543.2 362.7 L544.8 362.6 L546.4 362.7 L548.0 361.9 L549.6 362.2 L551.2 361.6 L552.8 362.1 L554.4 361.8 L556.0 362.0 L557.6 361.6 L559.2 362.6 L560.8 362.7 L562.4 362.7 L564.0 362.0 L565.6 362.8 L567.2 362.0 L568.8 361.9 L570.4 361.7 L572.0 361.9 L573.6 361.9 L575.2 362.2 L576.8 362.0 L578.4 362.7 L580.0 362.4 L581.6 362.7 L583.2 362.5 L584.8 362.5 L586.4 362.5 L588.0 361.9 L588.0 462.8 L586.4 464.7 L584.8 464.0 L583.2 462.8 L581.6 464.4 L580.0 465.5 L578.4 465.2 L576.8 465.7 L575.2 463.2 L573.6 463.5 L572.0 465.6 L570.4 465.3 L568.8 462.8 L567.2 464.0 L565.6 464.5 L564.0 463.9 L562.4 463.5 L560.8 464.9 L559.2 463.0 L557.6 465.0 L556.0 465.3 L554.4 463.7 L552.8 463.6 L551.2 464.2 L549.6 462.7 L548.0 465.5 L546.4 464.9 L544.8 464.2 L543.2 463.0 L541.6 464.3 L540.0 464.5 L538.4 465.6 L536.8 463.5 L535.2 465.7 L533.6 464.1 L532.0 465.6 L530.4 463.2 L528.8 463.0 L527.2 464.1 L525.6 463.5Z" fill="#7468c6"/>
<path d="M525.9 364.1 L526.9 363.1 L527.9 362.8 L528.9 364.2 L529.9 363.5 L530.9 363.3 L531.9 362.5 L532.9 362.6 L533.9 363.2 L534.9 364.0 L535.9 363.1 L536.9 362.6 L537.9 362.9 L538.9 362.7 L539.9 363.3 L540.9 363.7 L541.9 363.0 L542.9 363.0 L543.9 362.3 L544.9 364.1 L545.9 363.2 L546.9 363.9 L547.9 362.7 L548.9 363.0 L549.9 364.1 L550.9 363.9 L551.9 362.3 L552.9 364.0 L553.9 363.4 L554.9 363.0 L555.9 363.9 L556.9 364.1 L557.9 362.4 L558.9 363.2 L559.9 364.1 L560.9 363.5 L561.9 363.1 L562.9 362.3 L563.9 362.7 L564.9 363.5 L565.9 362.5 L566.9 363.5 L567.9 362.4 L568.9 363.2 L569.9 363.0 L570.9 363.4 L571.9 362.8 L572.9 364.1 L573.9 364.0 L574.9 362.7 L575.9 364.1 L576.9 362.8 L577.9 363.2 L578.9 363.0 L579.9 363.5 L580.9 362.7 L581.9 362.9 L582.9 363.6 L583.9 363.8 L584.9 363.2 L585.9 364.1 L586.9 363.8 L587.9 362.6 L587.9 463.4 L586.9 463.0 L585.9 463.0 L584.9 463.0 L583.9 463.4 L582.9 463.0 L581.9 463.1 L580.9 462.8 L579.9 463.5 L578.9 463.0 L577.9 463.3 L576.9 462.8 L575.9 463.4 L574.9 463.0 L573.9 463.2 L572.9 463.3 L571.9 463.2 L570.9 462.8 L569.9 463.0 L568.9 463.3 L567.9 462.9 L566.9 463.4 L565.9 463.0 L564.9 463.0 L563.9 463.5 L562.9 463.4 L561.9 463.2 L560.9 463.4 L559.9 463.4 L558.9 463.3 L557.9 462.9 L556.9 463.0 L555.9 463.5 L554.9 463.5 L553.9 462.8 L552.9 463.2 L551.9 463.4 L550.9 462.8 L549.9 463.5 L548.9 463.2 L547.9 463.0 L546.9 463.0 L545.9 463.3 L544.9 462.9 L543.9 463.0 L542.9 463.1 L541.9 463.2 L540.9 463.1 L539.9 463.5 L538.9 463.0 L537.9 462.9 L536.9 462.9 L535.9 462.9 L534.9 463.6 L533.9 463.0 L532.9 463.5 L531.9 462.9 L530.9 463.1 L529.9 463.0 L528.9 463.0 L527.9 463.4 L526.9 463.1 L525.9 462.9Z" fill="#bb55a6"/>
<path d="M530 362V372" stroke="#7468c6" stroke-width="0.8"/>
<path d="M538.5 362V400" stroke="#7468c6" stroke-width="0.8"/>
<path d="M543 362V375" stroke="#7468c6" stroke-width="0.8"/>
<path d="M548.5 362V380" stroke="#7468c6" stroke-width="0.8"/>
<path d="M563 362V372" stroke="#7468c6" stroke-width="0.8"/>
<path d="M573 362V410" stroke="#7468c6" stroke-width="0.8"/>
<path d="M581 362V390" stroke="#7468c6" stroke-width="0.8"/>
<path d="M586 362V378" stroke="#7468c6" stroke-width="0.8"/>
<path d="M530.5 445V464" stroke="#7468c6" stroke-width="0.8"/>
<path d="M544.5 437V464" stroke="#7468c6" stroke-width="0.8"/>
<path d="M563.5 428V464" stroke="#7468c6" stroke-width="0.8"/>
<path d="M581 440V464" stroke="#7468c6" stroke-width="0.8"/>
<rect x="526.40" y="462.60" width="1.00" height="3.30" fill="#a79ade" />
<rect x="529.15" y="462.60" width="1.00" height="3.30" fill="#a79ade" />
<rect x="531.90" y="462.60" width="1.00" height="3.30" fill="#a79ade" />
<rect x="534.65" y="462.60" width="1.00" height="3.30" fill="#a79ade" />
<rect x="537.40" y="462.60" width="1.00" height="3.30" fill="#a79ade" />
<rect x="540.15" y="462.60" width="1.00" height="3.30" fill="#a79ade" />
<rect x="542.90" y="462.60" width="1.00" height="3.30" fill="#a79ade" />
<rect x="545.65" y="462.60" width="1.00" height="3.30" fill="#a79ade" />
<rect x="548.40" y="462.60" width="1.00" height="3.30" fill="#a79ade" />
<rect x="551.15" y="462.60" width="1.00" height="3.30" fill="#a79ade" />
<rect x="553.90" y="462.60" width="1.00" height="3.30" fill="#a79ade" />
<rect x="556.65" y="462.60" width="1.00" height="3.30" fill="#a79ade" />
<rect x="559.40" y="462.60" width="1.00" height="3.30" fill="#a79ade" />
<rect x="562.15" y="462.60" width="1.00" height="3.30" fill="#a79ade" />
<rect x="564.90" y="462.60" width="1.00" height="3.30" fill="#a79ade" />
<rect x="567.65" y="462.60" width="1.00" height="3.30" fill="#a79ade" />
<rect x="570.40" y="462.60" width="1.00" height="3.30" fill="#a79ade" />
<rect x="573.15" y="462.60" width="1.00" height="3.30" fill="#a79ade" />
<rect x="575.90" y="462.60" width="1.00" height="3.30" fill="#a79ade" />
<rect x="578.65" y="462.60" width="1.00" height="3.30" fill="#a79ade" />
<rect x="581.40" y="462.60" width="1.00" height="3.30" fill="#a79ade" />
<rect x="584.15" y="462.60" width="1.00" height="3.30" fill="#a79ade" />
<rect x="586.90" y="462.60" width="1.00" height="3.30" fill="#a79ade" />
<path d="M530 361.5V367.5" stroke="#1a0a1c" stroke-width="0.9"/>
<path d="M534 361.5V366" stroke="#1a0a1c" stroke-width="0.9"/>
<path d="M548.7 361.5V375" stroke="#1a0a1c" stroke-width="0.9"/>
<path d="M560 361.5V367.5" stroke="#1a0a1c" stroke-width="0.9"/>
<path d="M564 361.5V366" stroke="#1a0a1c" stroke-width="0.9"/>
<path d="M567 361.5V366.8" stroke="#1a0a1c" stroke-width="0.9"/>
<path d="M573 361.5V366" stroke="#1a0a1c" stroke-width="0.9"/>
<path d="M577 361.5V366.4" stroke="#1a0a1c" stroke-width="0.9"/>
<path d="M586.9 361.5V376" stroke="#1a0a1c" stroke-width="0.9"/>
<rect x="11.85" y="58.05" width="103.9" height="118.8" fill="none" stroke="#1fb14d" stroke-width="4.1"/>
<text x="18.00" y="198.20" font-size="15.9" fill="#1fb14d" textLength="105.40" lengthAdjust="spacingAndGlyphs" >Battery voltage</text>
<text x="180.70" y="85.90" font-size="15.9" fill="#27c45a" textLength="142.60" lengthAdjust="spacingAndGlyphs" >Otii sourcing current</text>
<text x="177.20" y="231.30" font-size="15.9" fill="#27c45a" textLength="153.30" lengthAdjust="spacingAndGlyphs" >DC/DC output current</text>
<text x="180.90" y="451.80" font-size="15.9" fill="#27c45a" textLength="132.20" lengthAdjust="spacingAndGlyphs" >Otii sinking current</text>
</svg>
</body></html>
